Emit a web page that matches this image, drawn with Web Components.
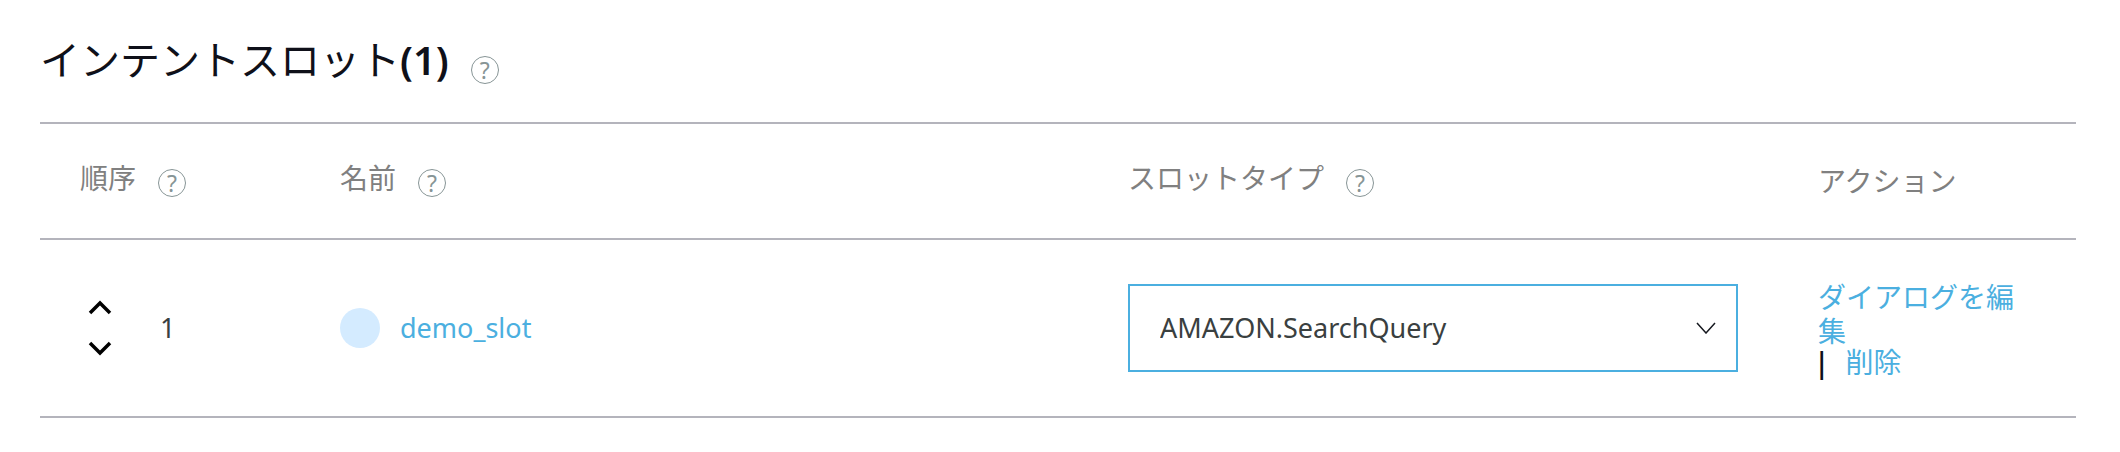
<!DOCTYPE html>
<html lang="ja">
<head>
<meta charset="utf-8">
<title>インテントスロット</title>
<style>
  body {
    margin: 0;
    background: #fff;
    color: #0f1019;
    font: 27px/34px "Noto Sans", "Noto Sans CJK JP", sans-serif;
  }
</style>
</head>
<body>
<slot-section></slot-section>

<template id="help-tip-template">
  <style>
    :host { display: inline-flex; }
    button {
      box-sizing: border-box;
      width: 28px;
      height: 28px;
      padding: 0;
      border: 1px solid #879596;
      border-radius: 50%;
      background: none;
      color: #879596;
      font: 23px/26px "Noto Sans", sans-serif;
      text-align: center;
    }
  </style>
  <button type="button" aria-label="ヘルプ">?</button>
</template>

<template id="help-label-template">
  <style>
    :host { display: flex; align-items: flex-start; gap: 22px; }
    help-tip { margin-top: var(--tip-drop, 8px); }
  </style>
  <slot></slot>
  <help-tip></help-tip>
</template>

<template id="order-control-template">
  <style>
    :host { display: flex; align-items: center; gap: 48px; color: #3a4040; }
    .arrows { display: flex; flex-direction: column; gap: 16px; padding-left: 8px; }
    button { display: block; padding: 0; border: 0; background: none; color: #000; line-height: 0; }
    svg { display: block; width: 24px; height: 24px; fill: none; stroke: currentColor; stroke-width: 3.500; }
  </style>
  <span class="arrows">
    <button type="button" aria-label="上へ移動"><svg viewBox="0 0 24 24"><path d="M2 17 12 7l10 10"/></svg></button>
    <button type="button" aria-label="下へ移動"><svg viewBox="0 0 24 24"><path d="M2 7l10 10L22 7"/></svg></button>
  </span>
  <slot></slot>
</template>

<template id="slot-name-template">
  <style>
    :host { display: flex; align-items: center; gap: 20px; }
    i { width: 40px; height: 40px; border-radius: 50%; background: #d4ebff; }
    a { color: #4bafe0; text-decoration: none; }
  </style>
  <i></i>
  <a href="#slot"><slot></slot></a>
</template>

<template id="type-select-template">
  <style>
    :host { display: grid; align-items: center; }
    select, svg { grid-area: 1 / 1; }
    select {
      appearance: none;
      box-sizing: border-box;
      width: 100%;
      height: 88px;
      margin: 0;
      padding: 0 80px 0 30px;
      border: 2px solid #4bafe0;
      border-radius: 0;
      background: #fff;
      color: #3a4040;
      font: inherit;
    }
    svg {
      z-index: 1;
      justify-self: end;
      width: 20px;
      height: 12px;
      margin-right: 22px;
      fill: none;
      stroke: #16191f;
      stroke-width: 1.500;
      pointer-events: none;
    }
  </style>
  <select aria-label="スロットタイプ"><option>AMAZON.SearchQuery</option></select>
  <svg viewBox="0 0 20 12"><path d="M1 1l9 10L19 1"/></svg>
</template>

<template id="row-actions-template">
  <style>
    :host { display: block; }
    a { color: #4bafe0; text-decoration: none; }
    .links { font-size: 28px; }
    .last { display: flex; align-items: baseline; gap: 16px; line-height: 28px; }
    .bar { font-weight: 600; margin-left: -4px; }
  </style>
  <div class="links">
    <a href="#dialog">ダイアログを編集</a>
    <div class="last"><span class="bar">|</span><a href="#delete">削除</a></div>
  </div>
</template>

<template id="slot-section-template">
  <style>
    :host { display: block; padding: 32px 44px 0 40px; }
    h2 {
      margin: 0 0 34px;
      font-size: 40px;
      line-height: 56px;
      font-weight: 400;
    }
    h2 help-label { --tip-drop: 24px; }
    h2 b { font-weight: 600; }
    table { width: 100%; border-collapse: separate; border-spacing: 0; table-layout: fixed; border-top: 2px solid #b4b4bc; }
    th, td { box-sizing: border-box; padding: 0 40px; border-bottom: 2px solid #b4b4bc; text-align: left; vertical-align: middle; }
    th { height: 116px; color: #808080; font-size: 28px; font-weight: 400; }
    th help-label { padding-bottom: 4px; }
    td { height: 178px; }
    .order { width: 260px; }
    .type { width: 690px; }
    .actions { width: 298px; }
  </style>
  <h2><help-label><span>インテントスロット<b>(1)</b></span></help-label></h2>
  <table>
    <thead>
      <tr>
        <th class="order" scope="col"><help-label>順序</help-label></th>
        <th scope="col"><help-label>名前</help-label></th>
        <th class="type" scope="col"><help-label>スロットタイプ</help-label></th>
        <th class="actions" scope="col">アクション</th>
      </tr>
    </thead>
    <tbody>
      <tr>
        <td><order-control>1</order-control></td>
        <td><slot-name>demo_slot</slot-name></td>
        <td><type-select></type-select></td>
        <td><row-actions></row-actions></td>
      </tr>
    </tbody>
  </table>
</template>

<script>
  const define = (name) => customElements.define(name, class extends HTMLElement {
    constructor() {
      super();
      this.attachShadow({ mode: "open" })
        .append(document.getElementById(name + "-template").content.cloneNode(true));
    }
  });
  ["help-tip", "help-label", "order-control", "slot-name", "type-select", "row-actions", "slot-section"].forEach(define);
</script>
</body>
</html>
